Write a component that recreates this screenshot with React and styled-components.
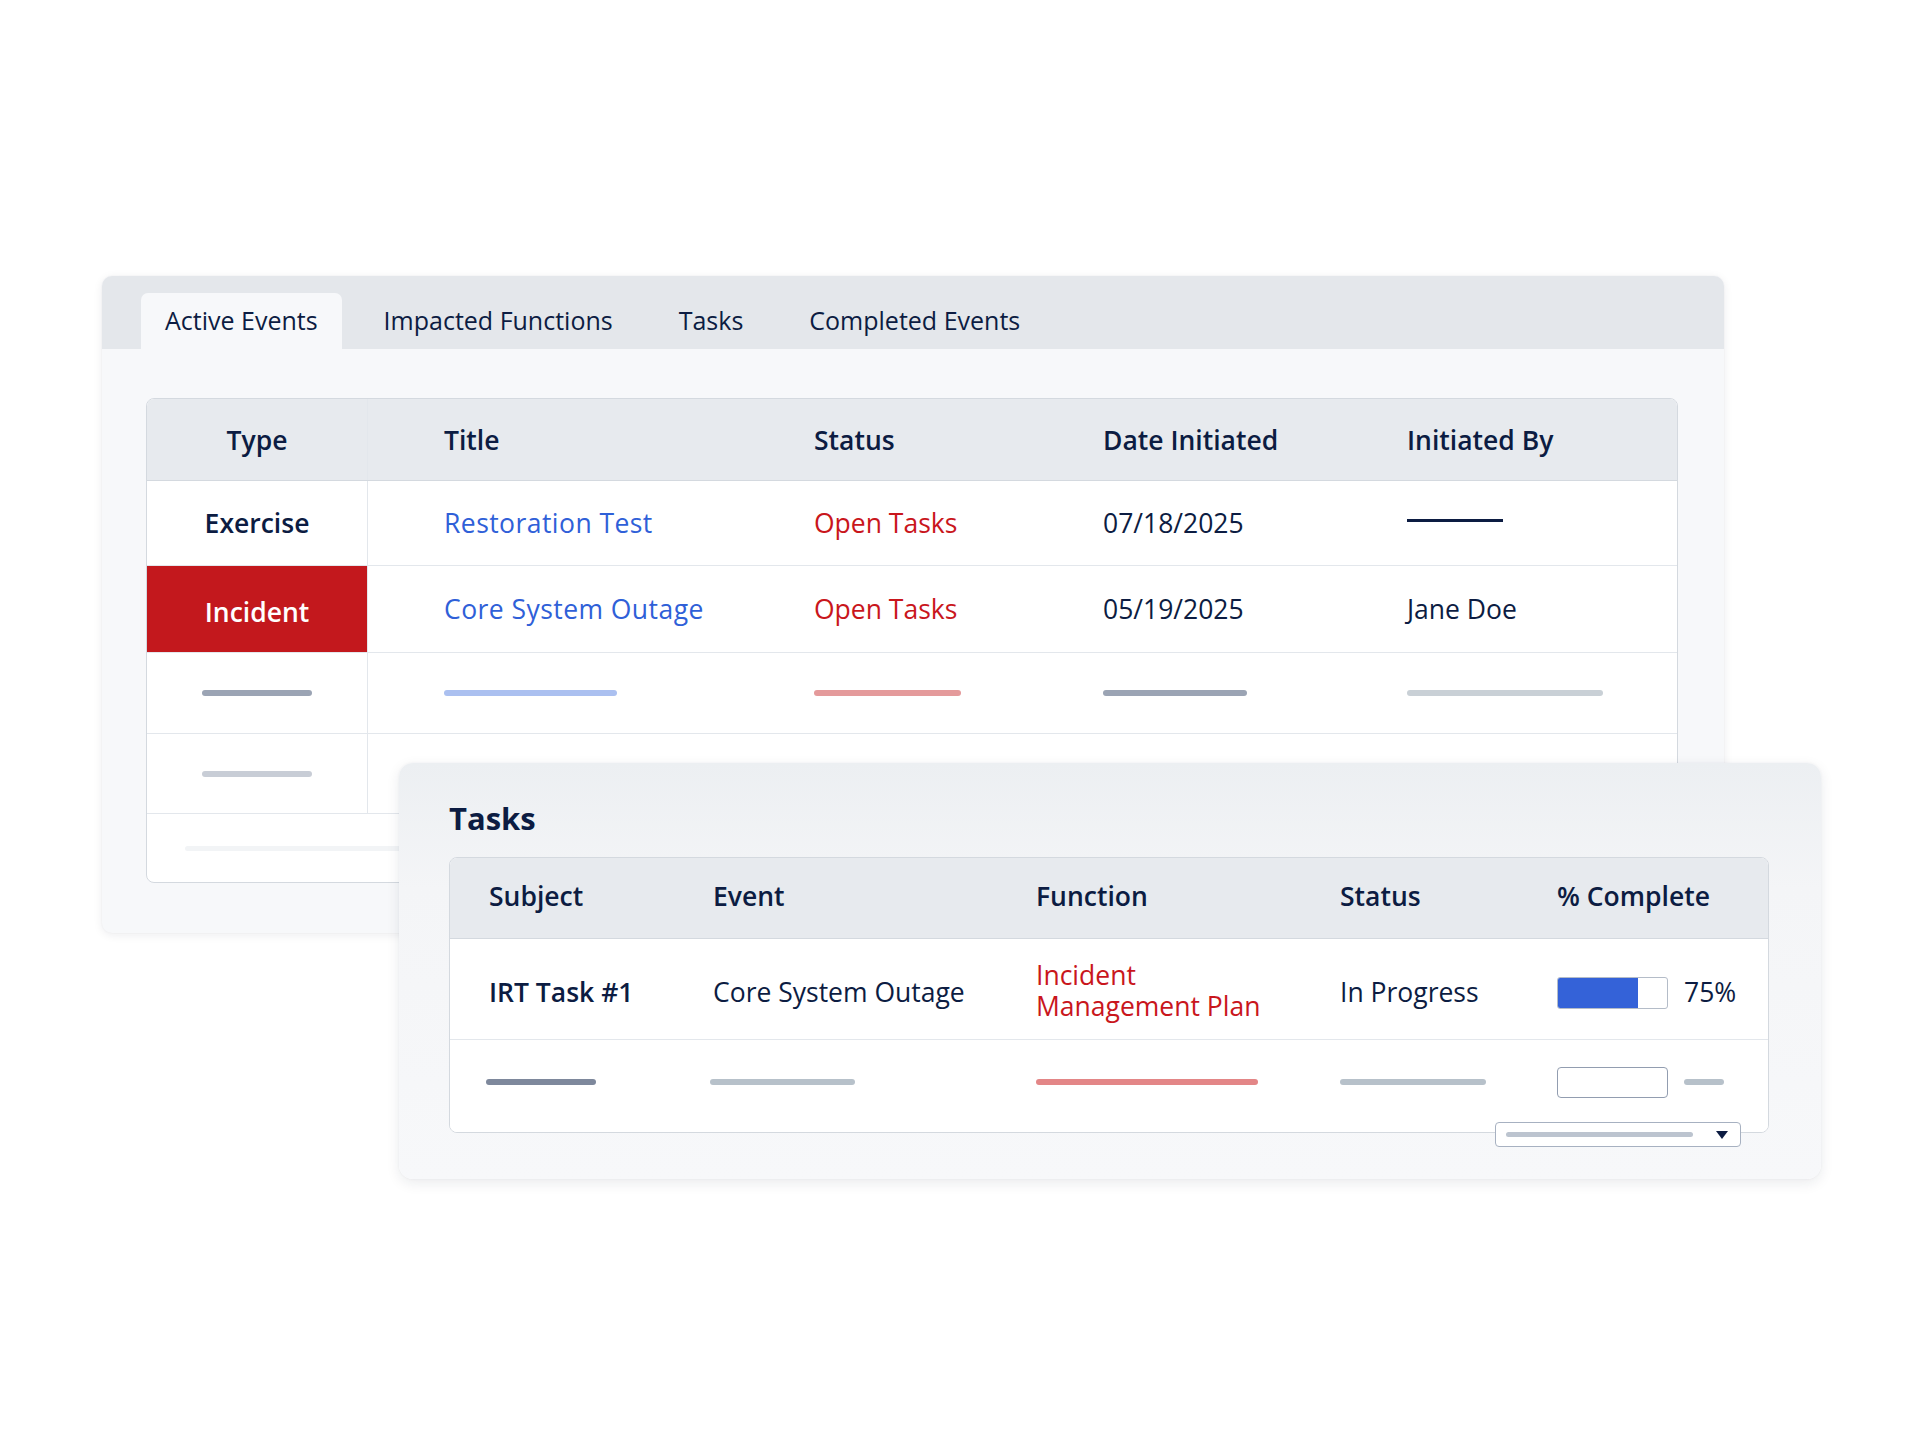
import React from "react";
import styled, { createGlobalStyle } from "styled-components";

const navy = "#0c1c42";

const GlobalStyle = createGlobalStyle`
  html, body {
    margin: 0;
    padding: 0;
    background: #ffffff;
  }
  body {
    font-family: "Open Sans", "Noto Sans", "Liberation Sans", sans-serif;
    color: ${navy};
  }
`;

const Page = styled.div`
  width: 1921px;
  height: 1440px;
  padding: 276px 0 0 102px;
  box-sizing: border-box;
`;

const Stage = styled.div`
  position: relative;
  width: 1720px;
`;

const EventsPanel = styled.div`
  width: 1622px;
  height: 657px;
  background: #f7f8fa;
  border-radius: 10px;
  box-shadow: 0 2px 10px rgba(20, 30, 50, 0.08), 0 0 2px rgba(20, 30, 50, 0.05);
  overflow: hidden;
  display: flex;
  flex-direction: column;
`;

const TabBar = styled.div`
  height: 74px;
  background: #e4e7eb;
  display: flex;
  align-items: flex-end;
  gap: 18px;
  padding-left: 39px;
  box-sizing: border-box;
`;

const Tab = styled.div`
  height: 56px;
  padding: 0 24px 3px;
  display: flex;
  align-items: center;
  font-size: 25px;
  font-weight: 500;
  color: ${navy};
  border-radius: 7px 7px 0 0;
  background: ${(p) => (p.$active ? "#f7f8fa" : "transparent")};
  box-sizing: border-box;
`;

const PanelBody = styled.div`
  padding: 49px 46px 50px 44px;
`;

const Table = styled.div`
  background: #ffffff;
  border: 1px solid #d4d9df;
  border-radius: 8px;
  overflow: hidden;
`;

const EventsRow = styled.div`
  display: grid;
  grid-template-columns: 221px 370px 289px 304px 1fr;
  height: ${(p) => p.$h}px;
  background: ${(p) => (p.$head ? "#e7eaee" : "#ffffff")};
  border-bottom: 1px solid ${(p) => (p.$head ? "#d4d9df" : "#e3e7ec")};
  box-sizing: border-box;
`;

const TypeCell = styled.div`
  display: flex;
  align-items: center;
  justify-content: center;
  border-right: 1px solid #e3e7ec;
  background: ${(p) => (p.$alert ? "#c3181d" : "transparent")};
  color: ${(p) => (p.$alert ? "#ffffff" : navy)};
  font-size: 26.5px;
  font-weight: 600;
  padding-top: ${(p) => (p.$alert ? "6px" : "0")};
`;

const Cell = styled.div`
  display: flex;
  align-items: center;
  padding-left: 76px;
  font-size: 26.5px;
  font-weight: ${(p) => (p.$head ? 600 : 400)};
  letter-spacing: ${(p) => (p.$link ? "0.45px" : "0")};
  color: ${(p) => p.$color || navy};
`;

const Bar = styled.div`
  width: ${(p) => p.$w}px;
  height: ${(p) => p.$t || 6}px;
  border-radius: 3px;
  background: ${(p) => p.$c};
`;

const Dash = styled.div`
  width: 96px;
  height: 3px;
  background: ${navy};
  margin-top: -6px;
`;

const FootArea = styled.div`
  height: 68px;
  padding-left: 38px;
  display: flex;
  align-items: center;
`;

/* floating tasks card, layered over the events panel */
const TasksPanel = styled.div`
  position: absolute;
  left: 297px;
  top: 487px;
  width: 1422px;
  height: 416px;
  box-sizing: border-box;
  padding: 0 52px 46px 50px;
  border-radius: 14px;
  background: linear-gradient(180deg, #eceff2 0%, #f4f5f7 30%, #f7f8fa 100%);
  box-shadow: 0 4px 14px rgba(20, 30, 50, 0.09), 0 0 3px rgba(20, 30, 50, 0.05);
  display: flex;
  flex-direction: column;
`;

const TasksTitle = styled.h2`
  margin: 0;
  height: 94px;
  display: flex;
  align-items: center;
  padding-top: 16px;
  box-sizing: border-box;
  font-size: 31px;
  font-weight: 700;
  color: ${navy};
`;

const TasksTableWrap = styled.div`
  position: relative;
`;

const TaskRow = styled.div`
  display: grid;
  grid-template-columns: 224px 323px 304px 217px 1fr;
  padding-left: 39px;
  height: ${(p) => p.$h}px;
  padding-top: ${(p) => p.$pt || 0}px;
  padding-bottom: ${(p) => p.$pb || 0}px;
  background: ${(p) => (p.$head ? "#e7eaee" : "#ffffff")};
  border-bottom: ${(p) => (p.$last ? "none" : `1px solid ${p.$head ? "#d4d9df" : "#e3e7ec"}`)};
  box-sizing: border-box;
`;

const TaskCell = styled.div`
  display: flex;
  align-items: center;
  gap: 16px;
  font-size: 26.5px;
  line-height: 31px;
  font-weight: ${(p) => (p.$bold ? 600 : 400)};
  color: ${(p) => p.$color || navy};
  margin-left: ${(p) => p.$ml || 0}px;
`;

const Wrap = styled.span`
  max-width: 240px;
  margin-top: -4px;
`;

const Progress = styled.div`
  width: 111px;
  height: 32px;
  box-sizing: border-box;
  border: 1px solid #b4bcc8;
  border-radius: 3px;
  background: #ffffff;
  overflow: hidden;
  display: flex;
`;

const ProgressFill = styled.div`
  height: 100%;
  background: #3462d8;
`;

const EmptyBox = styled.div`
  width: 111px;
  height: 31px;
  box-sizing: border-box;
  border: 1.5px solid #929db0;
  border-radius: 4px;
  background: #ffffff;
`;

const Select = styled.div`
  position: absolute;
  left: 1046px;
  top: 265px;
  width: 246px;
  height: 25px;
  box-sizing: border-box;
  border: 1.5px solid #a7b1c1;
  border-radius: 4px;
  background: #ffffff;
  display: flex;
  align-items: center;
  justify-content: space-between;
  padding: 0 12px 0 10px;
`;

const Caret = styled.div`
  width: 0;
  height: 0;
  border-left: 6px solid transparent;
  border-right: 6px solid transparent;
  border-top: 8px solid ${navy};
`;

const events = [
  { type: "Exercise", title: "Restoration Test", date: "07/18/2025", by: null, h: 85 },
  { type: "Incident", title: "Core System Outage", date: "05/19/2025", by: "Jane Doe", h: 87, alert: true },
];

export default function App() {
  return (
    <Page>
      <GlobalStyle />
      <Stage>
        <EventsPanel>
          <TabBar>
            <Tab $active>Active Events</Tab>
            <Tab>Impacted Functions</Tab>
            <Tab>Tasks</Tab>
            <Tab>Completed Events</Tab>
          </TabBar>
          <PanelBody>
            <Table>
              <EventsRow $head $h={82}>
                <TypeCell>Type</TypeCell>
                <Cell $head>Title</Cell>
                <Cell $head>Status</Cell>
                <Cell $head>Date Initiated</Cell>
                <Cell $head>Initiated By</Cell>
              </EventsRow>
              {events.map((ev) => (
                <EventsRow key={ev.title} $h={ev.h}>
                  <TypeCell $alert={ev.alert}>{ev.type}</TypeCell>
                  <Cell $link $color="#2f60d8">{ev.title}</Cell>
                  <Cell $color="#c9161c">Open Tasks</Cell>
                  <Cell>{ev.date}</Cell>
                  <Cell>{ev.by ? ev.by : <Dash />}</Cell>
                </EventsRow>
              ))}
              <EventsRow $h={81}>
                <TypeCell>
                  <Bar $w={110} $c="#9ba4b4" />
                </TypeCell>
                <Cell><Bar $w={173} $c="#abc0f0" /></Cell>
                <Cell><Bar $w={147} $c="#e49a9b" /></Cell>
                <Cell><Bar $w={144} $c="#9ba4b4" /></Cell>
                <Cell><Bar $w={196} $c="#c9d0d6" /></Cell>
              </EventsRow>
              <EventsRow $h={80}>
                <TypeCell>
                  <Bar $w={110} $c="#c8cdd6" />
                </TypeCell>
                <Cell />
                <Cell />
                <Cell />
                <Cell />
              </EventsRow>
              <FootArea>
                <Bar $w={260} $t={5} $c="#f2f4f6" />
              </FootArea>
            </Table>
          </PanelBody>
        </EventsPanel>

        <TasksPanel>
          <TasksTitle>Tasks</TasksTitle>
          <TasksTableWrap>
            <Table>
              <TaskRow $head $h={81} $pb={4}>
                <TaskCell $bold>Subject</TaskCell>
                <TaskCell $bold>Event</TaskCell>
                <TaskCell $bold>Function</TaskCell>
                <TaskCell $bold>Status</TaskCell>
                <TaskCell $bold>% Complete</TaskCell>
              </TaskRow>
              <TaskRow $h={101} $pt={7}>
                <TaskCell $bold>IRT Task #1</TaskCell>
                <TaskCell>Core System Outage</TaskCell>
                <TaskCell $color="#c9161c">
                  <Wrap>Incident Management Plan</Wrap>
                </TaskCell>
                <TaskCell>In Progress</TaskCell>
                <TaskCell>
                  <Progress>
                    <ProgressFill style={{ width: "73%" }} />
                  </Progress>
                  75%
                </TaskCell>
              </TaskRow>
              <TaskRow $last $h={92} $pb={8}>
                <TaskCell $ml={-3}>
                  <Bar $w={110} $c="#7e889c" />
                </TaskCell>
                <TaskCell $ml={-3}>
                  <Bar $w={145} $c="#b7c1ca" />
                </TaskCell>
                <TaskCell>
                  <Bar $w={222} $c="#e38687" />
                </TaskCell>
                <TaskCell>
                  <Bar $w={146} $c="#b7c1ca" />
                </TaskCell>
                <TaskCell>
                  <EmptyBox />
                  <Bar $w={40} $c="#b7c1ca" />
                </TaskCell>
              </TaskRow>
            </Table>
            <Select>
              <Bar $w={187} $t={5} $c="#bcc4cf" />
              <Caret />
            </Select>
          </TasksTableWrap>
        </TasksPanel>
      </Stage>
    </Page>
  );
}
